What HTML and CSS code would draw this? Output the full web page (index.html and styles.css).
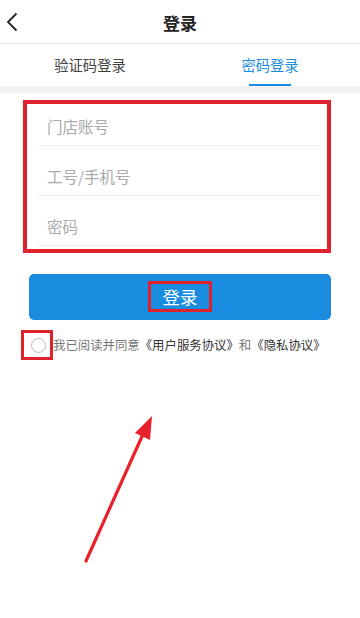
FILE: index.html
```html
<!DOCTYPE html>
<html lang="zh">
<head>
<meta charset="utf-8">
<title>登录</title>
<link rel="stylesheet" href="styles.css">
</head>
<body>
<div class="page">
  <header class="topbar">
    <span class="back">
      <svg width="12" height="20" viewBox="0 0 12 20"><path d="M10.5 1.5 L2 10 L10.5 18.5" fill="none" stroke="#222" stroke-width="1.8"/></svg>
    </span>
    <h1 class="title">登录</h1>
  </header>
  <nav class="tabs">
    <div class="tab">验证码登录</div>
    <div class="tab active">密码登录<span class="underline"></span></div>
  </nav>
  <div class="band"></div>
  <main class="content">
    <div class="form-box">
      <div class="field first">门店账号</div>
      <div class="field">工号/手机号</div>
      <div class="field">密码</div>
    </div>
    <div class="btn">
      <span class="btn-text">登录</span>
      <span class="mark mark-btn"></span>
    </div>
    <div class="agree">
      <span class="check-wrap">
        <span class="check"></span>
        <span class="mark mark-check"></span>
      </span>
      <span class="agree-text">我已阅读并同意<b>《用户服务协议》</b>和<b>《隐私协议》</b></span>
    </div>
  </main>
  <svg class="arrow" width="360" height="618" viewBox="0 0 360 618">
    <line x1="86" y1="561" x2="144" y2="432" stroke="#e8212b" stroke-width="3.2" stroke-linecap="round"/>
    <polygon points="152,416 135,433 150,440" fill="#e8212b"/>
  </svg>
</div>
</body>
</html>
```
FILE: styles.css
```css
* { box-sizing: border-box; }
html, body { margin: 0; padding: 0; background: #fff; }
body {
  font-family: "Noto Sans CJK SC", "Noto Sans", sans-serif;
  color: #222;
}
.page {
  position: relative;
  width: 360px;
  height: 618px;
  overflow: hidden;
}
.topbar {
  height: 44px;
  display: flex;
  align-items: center;
  justify-content: center;
  position: relative;
  border-bottom: 1px solid #ececec;
}
.back {
  position: absolute;
  left: 6px;
  top: 12px;
  display: flex;
}
.title {
  margin: 0;
  font-size: 17px;
  font-weight: bold;
  color: #222;
  line-height: 1;
  margin-top: 1px;
}
.tabs {
  display: flex;
  height: 42px;
}
.tab {
  flex: 1;
  display: flex;
  align-items: center;
  justify-content: center;
  font-size: 14.3px;
  color: #444;
  position: relative;
  padding-bottom: 1px;
}
.tab.active { color: #1a8ce0; }
.underline {
  position: absolute;
  bottom: 0;
  left: 50%;
  width: 42px;
  margin-left: -21px;
  height: 2px;
  background: #1a8ce0;
}
.band {
  height: 7px;
  background: #f2f2f2;
}
.content {
  padding: 7px 29px 0 23px;
}
.form-box {
  width: 308px;
  border: 4px solid #e0222c;
  padding: 0 7px 3px 9px;
}
.field {
  height: 50px;
  border-bottom: 1px solid #f1f1f1;
  padding: 20px 0 0 11px;
  font-size: 15.5px;
  line-height: 20px;
  color: #aaa;
}
.field.first {
  height: 42px;
  padding-top: 12px;
}
.btn {
  position: relative;
  margin: 21px 0 0 6px;
  height: 46px;
  width: 302px;
  background: #1a8ce0;
  border-radius: 5px;
  display: flex;
  align-items: center;
  justify-content: center;
}
.btn-text {
  color: #fff;
  font-size: 17.5px;
  line-height: 1;
}
.mark {
  position: absolute;
  border: 3px solid #e0222c;
}
.mark-btn {
  left: 119px;
  top: 7px;
  width: 64px;
  height: 31px;
}
.agree {
  display: flex;
  align-items: center;
  margin: 10px 0 0 -2px;
}
.check-wrap {
  position: relative;
  width: 32px;
  height: 30px;
  display: flex;
  align-items: center;
  justify-content: center;
}
.check {
  width: 15px;
  height: 15px;
  border: 1px solid #bbb;
  border-radius: 50%;
  margin-left: 2px;
}
.mark-check {
  left: 0;
  top: 0;
  width: 32px;
  height: 30px;
}
.agree-text {
  font-size: 12.4px;
  color: #777;
  white-space: nowrap;
}
.agree-text b {
  font-weight: normal;
  color: #333;
}
.arrow {
  position: absolute;
  left: 0;
  top: 0;
  pointer-events: none;
}
```
